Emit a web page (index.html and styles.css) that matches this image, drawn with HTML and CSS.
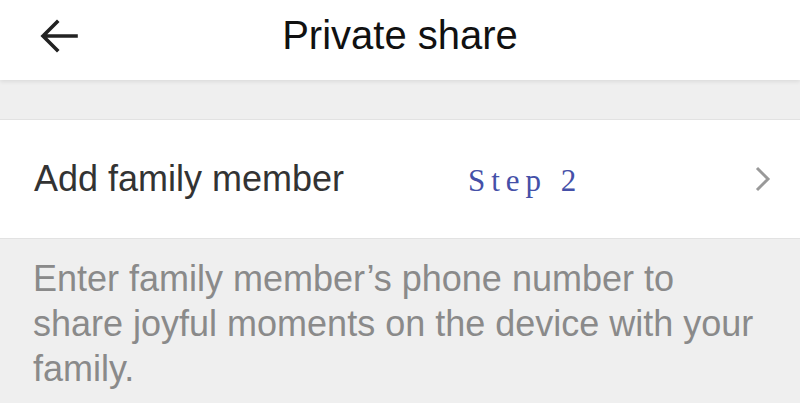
FILE: index.html
```html
<!DOCTYPE html>
<html lang="en">

<head>
    <meta charset="UTF-8">
    <meta name="viewport" content="width=device-width, initial-scale=1.0">
    <title>Private share</title>
    <link rel="stylesheet" href="styles.css">
</head>

<body>
    <header class="top-bar">
        <button class="back-btn" aria-label="Back">
            <svg width="40" height="40" viewBox="0 0 40 40">
                <path d="M38 20 H6 M19 6 L5 20 L19 34" fill="none" stroke="#222" stroke-width="3.6" stroke-linecap="square" stroke-linejoin="miter"/>
            </svg>
        </button>
        <h1 class="title">Private share</h1>
    </header>

    <div class="spacer"></div>

    <div class="list-row">
        <span class="row-label">Add family member</span>
        <span class="step">Step 2</span>
        <svg class="chevron" width="18" height="28" viewBox="0 0 18 28">
            <path d="M3 3 L14 14 L3 25" fill="none" stroke="#999" stroke-width="3"/>
        </svg>
    </div>

    <p class="hint">Enter family member’s phone number to share joyful moments on the device with your family.</p>
</body>

</html>
```

FILE: styles.css
```css
html,
body {
    margin: 0;
    padding: 0;
    background-color: #efefef;
    font-family: "Liberation Sans", Arial, sans-serif;
}

.top-bar {
    height: 80px;
    background-color: #fff;
    display: flex;
    align-items: center;
    justify-content: center;
    position: relative;
    box-shadow: 0 2px 4px rgba(0, 0, 0, 0.08);
}

.back-btn {
    position: absolute;
    left: 38px;
    top: 16px;
    padding: 0;
    border: none;
    background: none;
    width: 40px;
    height: 40px;
}

.title {
    margin: 0;
    margin-top: -10px;
    font-size: 40px;
    font-weight: normal;
    color: #111;
}

.spacer {
    height: 39px;
}

.list-row {
    height: 118px;
    background-color: #fff;
    border-top: 1px solid #e2e2e2;
    border-bottom: 1px solid #e2e2e2;
    display: flex;
    align-items: center;
    padding: 0 28px 0 34px;
}

.row-label {
    font-size: 36px;
    color: #333;
    width: 434px;
}

.step {
    font-family: "Liberation Serif", serif;
    font-size: 31px;
    letter-spacing: 6px;
    color: #4550a8;
    flex: 1;
    margin-top: 3px;
}

.chevron {
    display: block;
}

.hint {
    margin: 0;
    padding: 17px 40px 0 33px;
    font-size: 36px;
    line-height: 45px;
    color: #8a8a8a;
}
```
